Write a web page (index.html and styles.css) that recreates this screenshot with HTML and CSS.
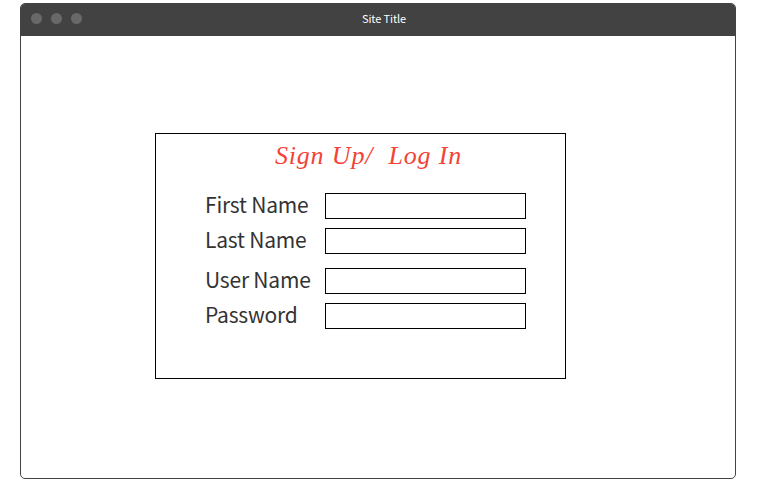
FILE: index.html
```html
<!DOCTYPE html>
<html lang="en">
<head>
<meta charset="utf-8">
<title>Site Title</title>
<link rel="stylesheet" href="styles.css">
</head>
<body>
<div class="window">
  <header class="titlebar">
    <div class="dots"><i></i><i></i><i></i></div>
    <span class="title">Site Title</span>
  </header>
  <main class="content">
    <form class="card">
      <h1>Sign Up/&nbsp; Log In</h1>
      <div class="row"><label for="first">First Name</label><input id="first"></div>
      <div class="row"><label for="last">Last Name</label><input id="last"></div>
      <div class="row account"><label for="user">User Name</label><input id="user"></div>
      <div class="row"><label for="pass">Password</label><input id="pass" type="password"></div>
    </form>
  </main>
</div>
</body>
</html>
```
FILE: styles.css
```css
* { box-sizing: border-box; }
body { margin: 0; background: #fff; font-family: "Noto Sans CJK SC", "Noto Sans", sans-serif; }
.window { width: 716px; height: 476px; margin: 3px 0 0 20px; border: 1px solid #424242; border-radius: 5px; overflow: hidden; }
.titlebar { height: 32px; background: #424242; display: grid; grid-template-columns: 1fr auto 1fr; align-items: center; padding: 0 10px; }
.dots { display: flex; gap: 9px; padding-bottom: 4px; }
.dots i { width: 11px; height: 11px; border-radius: 50%; background: #686868; }
.title { color: #fff; font-size: 11px; line-height: 16px; letter-spacing: -0.1px; padding: 0 0 4px 12px; }
.content { padding: 97px 0 0 134px; }
.card { width: 411px; height: 246px; border: 1px solid #000; padding-left: 49px; }
h1 { margin: 0 0 9px 70px; height: 50px; white-space: nowrap; color: #f44336; font: italic 26px/44px "Liberation Serif", serif; letter-spacing: 0.75px; word-spacing: 0.4px; }
.row { display: flex; height: 26px; margin-bottom: 9px; align-items: center; }
.row.account { margin-top: 14px; }
label { width: 120px; padding-bottom: 4px; font-size: 21px; line-height: 26px; letter-spacing: -0.2px; color: #333; white-space: nowrap; }
input { width: 201px; height: 26px; border: 1px solid #000; border-radius: 0; background: #fff; padding: 2px 5px; }
```
